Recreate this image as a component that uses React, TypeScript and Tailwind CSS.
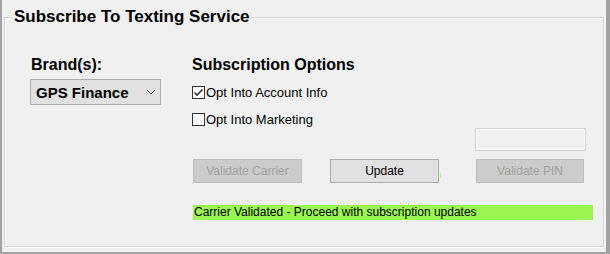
import { useState } from 'react'

const font = { fontFamily: '"Liberation Sans", Arial, sans-serif' }

function CheckBox({ checked, label, onToggle }: { checked: boolean; label: string; onToggle: () => void }) {
  return (
    <label className="flex h-[13px] items-center cursor-default" onClick={onToggle}>
      <span className="flex h-[13px] w-[13px] items-center justify-center border border-[#333333] bg-white">
        {checked && (
          <svg width="11" height="11" viewBox="0 0 11 11">
            <path d="M1.5 5.5 L4 8 L9.5 2.5" fill="none" stroke="#333333" strokeWidth="1.6" />
          </svg>
        )}
      </span>
      <span className="ml-[1px] text-[13px] leading-[13px] text-black">{label}</span>
    </label>
  )
}

function WinButton({ children, disabled, className = '' }: { children: string; disabled?: boolean; className?: string }) {
  return (
    <button
      disabled={disabled}
      className={
        'h-[24px] border text-[12px] leading-none ' +
        (disabled
          ? 'border-[#bfbfbf] bg-[#cccccc] text-[#a0a0a0] '
          : 'border-[#adadad] bg-[#e1e1e1] text-black ') +
        className
      }
    >
      {children}
    </button>
  )
}

export default function App() {
  const [accountInfo, setAccountInfo] = useState(true)
  const [marketing, setMarketing] = useState(false)

  return (
    <div
      style={font}
      className="flex h-[254px] w-[610px] flex-col border-b-2 border-l-2 border-r-4 border-[#a3a3a3] bg-[#f0f0f0]"
    >
      <fieldset className="mt-[7px] ml-[2px] mr-[2px] h-[240px] border border-[#d3d3d3] shadow-[inset_1px_1px_0_#ffffff,1px_1px_0_#ffffff]">
        <legend className="ml-[7px] bg-[#f0f0f0] px-[2px] text-[17px] font-bold leading-[20px] text-black">
          Subscribe To Texting Service
        </legend>

        <div className="flex pl-[25px] pt-[29px]">
          <div className="flex w-[131px] flex-col">
            <div className="h-[17px] pl-px text-[16px] font-bold leading-[17px] text-black">Brand(s):</div>
            <div className="mt-[6px] flex h-[26px] items-center justify-between border border-[#adadad] bg-[#e1e1e1] pl-[5px] pr-[4px]">
              <span className="text-[15px] font-bold leading-none text-black">GPS Finance</span>
              <svg width="10" height="6" viewBox="0 0 10 6">
                <path d="M1 1 L5 5 L9 1" fill="none" stroke="#606060" strokeWidth="1" />
              </svg>
            </div>
          </div>

          <div className="ml-[31px] flex w-[402px] flex-col">
            <div className="h-[17px] text-[16px] font-bold leading-[17px] text-black">Subscription Options</div>
            <div className="mt-[13px]">
              <CheckBox checked={accountInfo} label="Opt Into Account Info" onToggle={() => setAccountInfo(!accountInfo)} />
            </div>
            <div className="mt-[14px]">
              <CheckBox checked={marketing} label="Opt Into Marketing" onToggle={() => setMarketing(!marketing)} />
            </div>
            <div className="ml-[283px] mt-[2px] h-[23px] w-[111px] border border-[#cdcdcd] bg-[#f0f0f0] shadow-[inset_0_0_0_1px_#ffffff]" />
            <div className="mt-[8px] flex pl-px">
              <WinButton disabled className="w-[109px]">Validate Carrier</WinButton>
              <WinButton className="ml-[28px] w-[109px]">Update</WinButton>
              <span className="ml-px mt-[14px] h-[5px] w-px bg-[#b8f29a]" />
              <WinButton disabled className="ml-[35px] w-[108px]">Validate PIN</WinButton>
            </div>
            <div className="ml-px mt-[22px] h-[15px] w-[400px] bg-[#9bf552] pl-px text-[12px] leading-[15px] text-black">
              Carrier Validated - Proceed with subscription updates
            </div>
          </div>
        </div>
      </fieldset>
    </div>
  )
}
